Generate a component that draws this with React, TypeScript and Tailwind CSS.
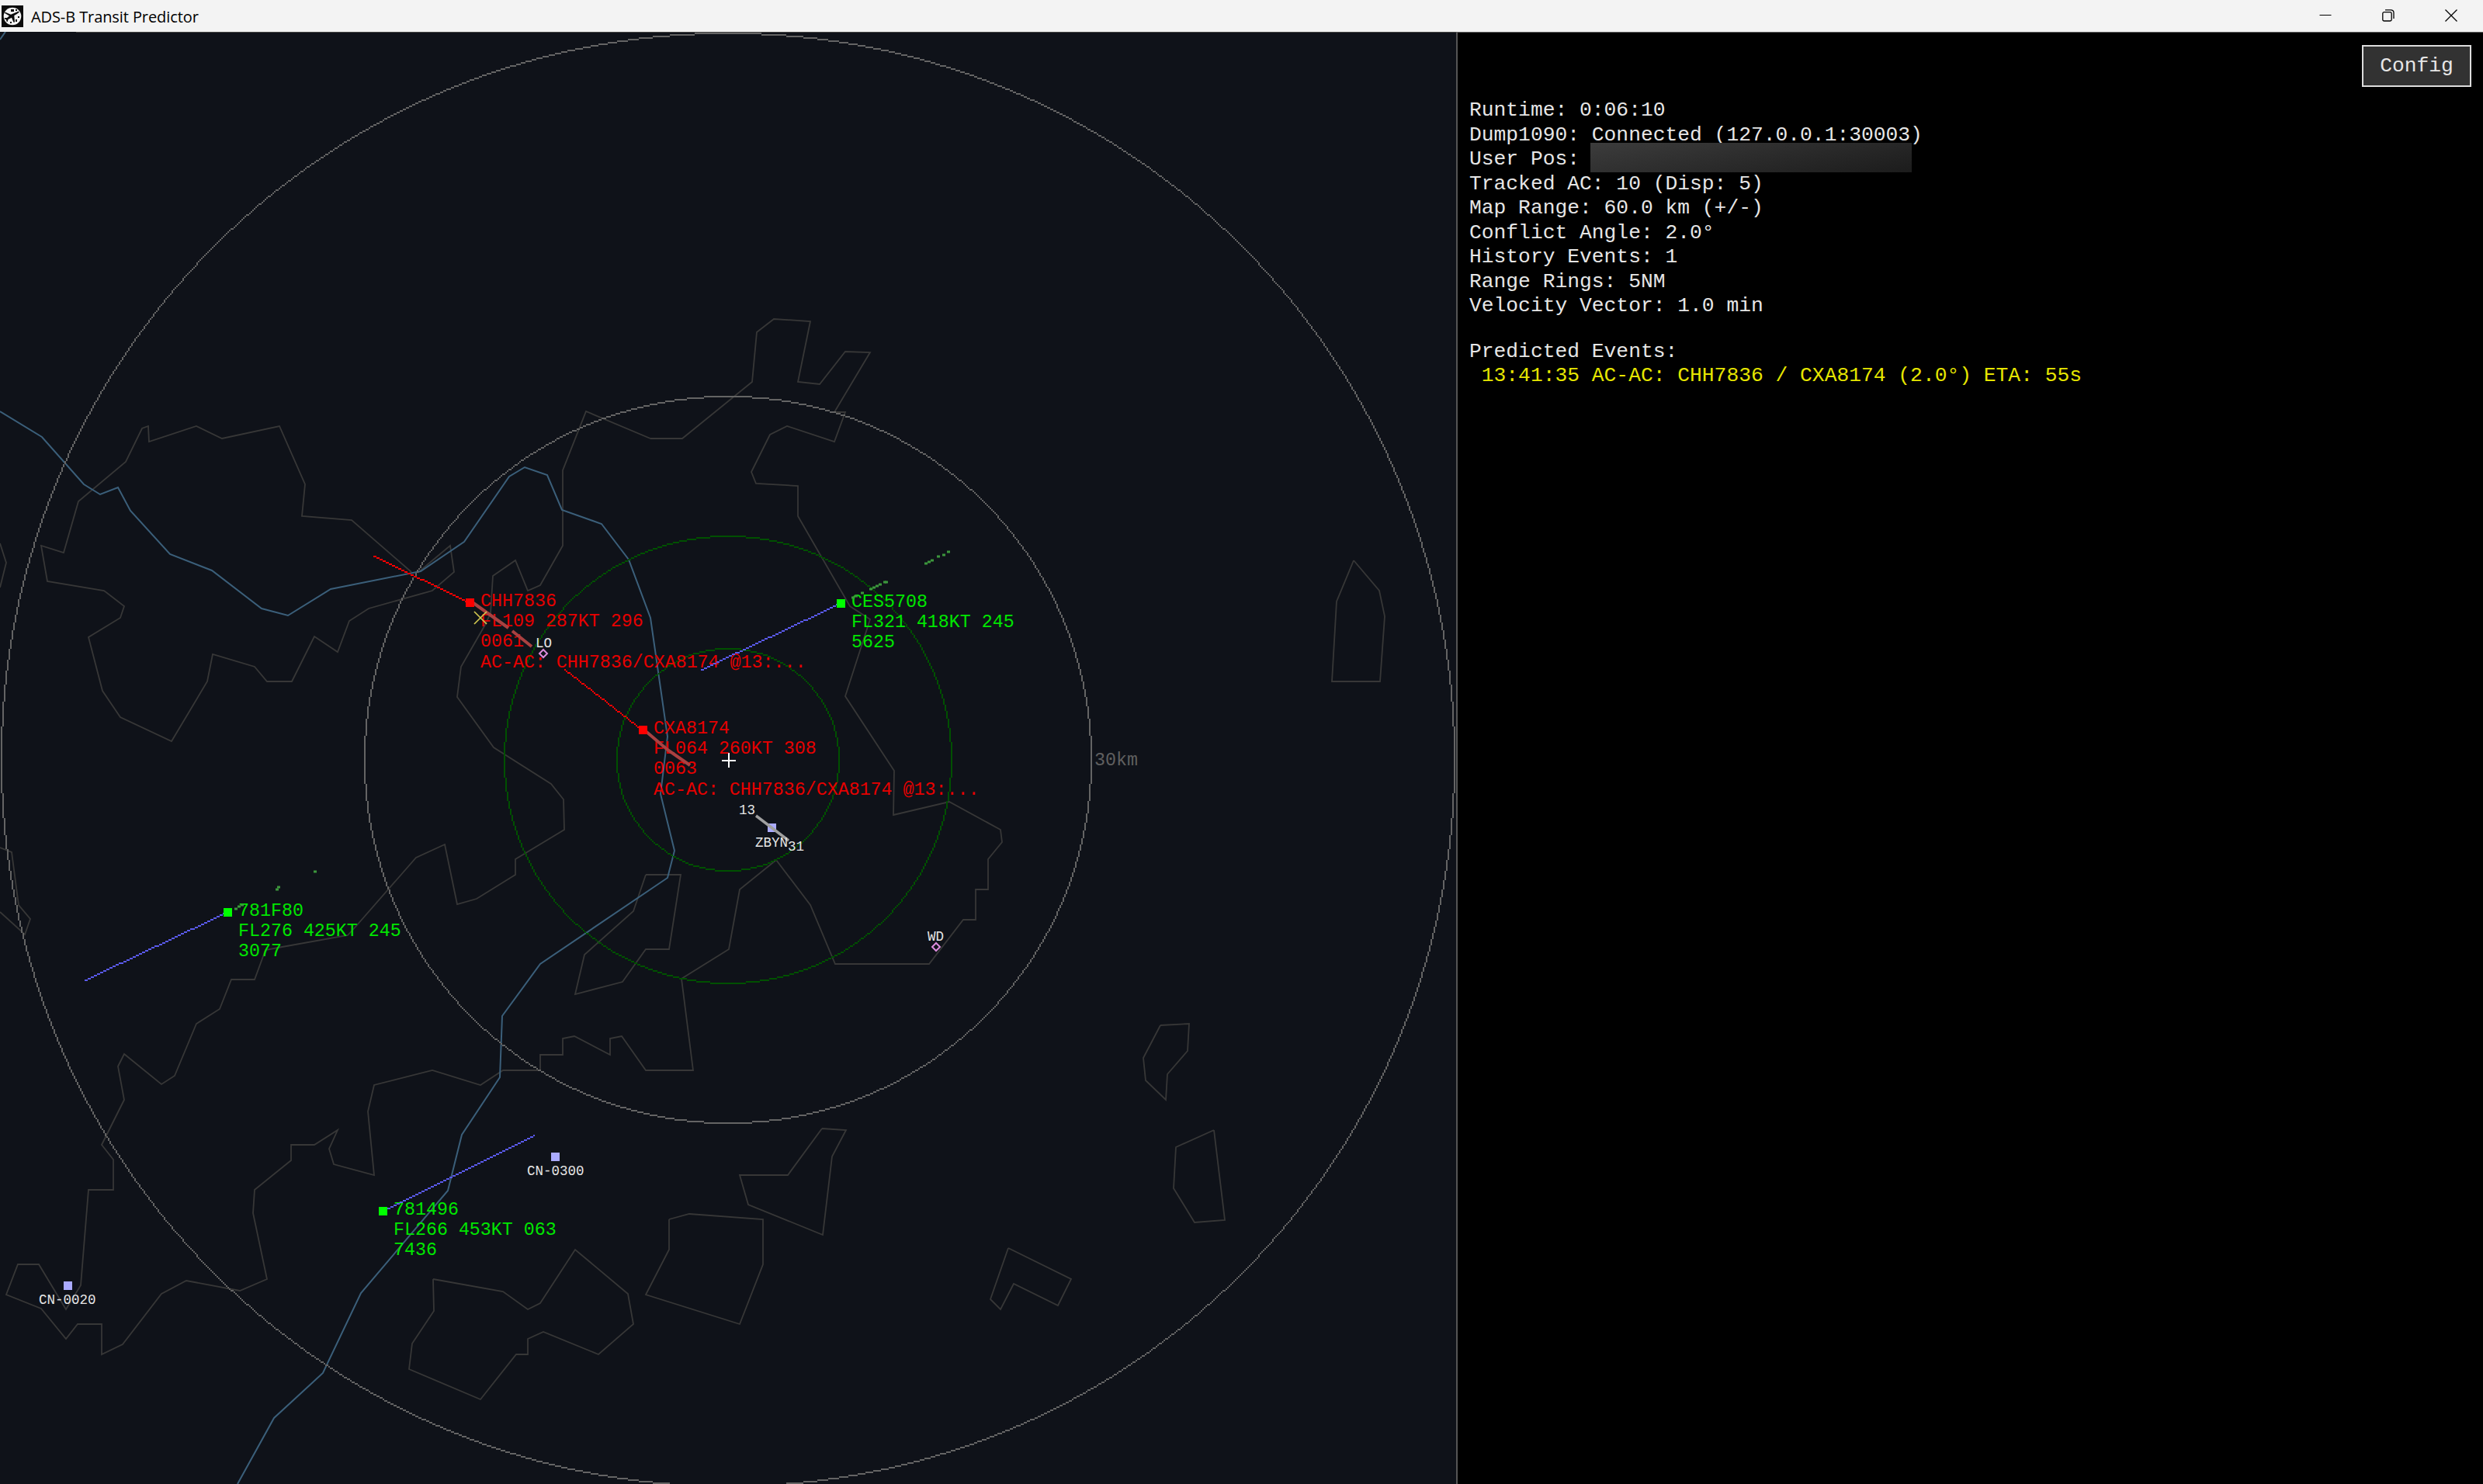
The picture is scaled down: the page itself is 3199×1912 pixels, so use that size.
import React from "react";

type Pt = [number, number];

const MAP_TOP = 41;
const PX = 2;

/** Midpoint circle rasterised on the radar's 2px grid. */
function ring(cx: number, cy: number, r: number): string {
  const seen = new Set<string>();
  let x = r;
  let y = 0;
  let err = 1 - r;
  while (x >= y) {
    const pts: Pt[] = [
      [x, y], [y, x], [-y, x], [-x, y], [-x, -y], [-y, -x], [y, -x], [x, -y],
    ];
    for (const [dx, dy] of pts) seen.add(`${cx + dx},${cy + dy}`);
    y++;
    if (err < 0) err += 2 * y + 1;
    else {
      x--;
      err += 2 * (y - x) + 1;
    }
  }
  return cells(seen);
}

/** Bresenham line rasterised on the radar's 2px grid. */
function vector([ax, ay]: Pt, [bx, by]: Pt): string {
  let x = Math.round(ax / PX);
  let y = Math.round((ay - MAP_TOP) / PX);
  const x1 = Math.round(bx / PX);
  const y1 = Math.round((by - MAP_TOP) / PX);
  const dx = Math.abs(x1 - x);
  const dy = -Math.abs(y1 - y);
  const sx = x < x1 ? 1 : -1;
  const sy = y < y1 ? 1 : -1;
  let e = dx + dy;
  const seen = new Set<string>();
  for (;;) {
    seen.add(`${x},${y}`);
    if (x === x1 && y === y1) break;
    const e2 = 2 * e;
    if (e2 >= dy) { e += dy; x += sx; }
    if (e2 <= dx) { e += dx; y += sy; }
  }
  return cells(seen);
}

function cells(seen: Set<string>): string {
  let d = "";
  seen.forEach((k) => {
    const [x, y] = k.split(",").map(Number);
    d += `M${x * PX - 1} ${y * PX + MAP_TOP - 1}h${PX}v${PX}h-${PX}z`;
  });
  return d;
}

const RIVERS = [
  "0,530 54,563 108,624 129,637 152,628 168,658 219,714 273,735 337,784 371,793 426,759 542,736 598,698 656,614 676,602 705,612 724,657 775,675 810,721 838,796 860,949 851,1023 869,1096 860,1131 696,1242 647,1309 644,1388 595,1462 577,1534 465,1666 416,1769 353,1827 306,1912",
  "0,51 7,41",
];

const BORDERS = [
  "530,737 453,670 389,665 393,624 360,549 286,565 253,549 192,569 191,549 183,552 162,595 101,646 82,712 53,703 61,749 134,761 160,781 155,796 114,821 132,890 155,924 221,955 267,878 274,843 328,859 344,878 376,878 405,820 435,840 450,800 475,784 557,761 585,737 580,703 538,738",
  "0,700 8,725 0,757",
  "0,1092 15,1098 24,1166 39,1184 32,1204 0,1175",
  "838,565 879,565 969,492 975,428 997,411 1044,414 1028,492 1056,495 1089,453 1121,454 1075,531 1089,531 1075,569 1014,549 992,560 968,608 974,623 1028,626 1028,665 1095,781 1121,798 1089,897 1152,993 1151,1050 1223,1033 1289,1069 1291,1085 1273,1107 1273,1146 1257,1146 1257,1185 1241,1185 1197,1242 1076,1242 1044,1166 1000,1108 953,1146 939,1223 878,1261 893,1379 832,1379 801,1335 786,1338 786,1359 740,1335 725,1338 725,1359 696,1359 696,1379 648,1379 619,1398 557,1379 482,1398 474,1432 482,1514 430,1500 424,1480 435,1456 405,1475 375,1475 375,1495 328,1533 326,1563 344,1648 309,1663 240,1650 208,1667 158,1732 131,1745 131,1706 100,1706 85,1725 53,1686 8,1668 23,1629 50,1629 85,1687 104,1656 114,1533 146,1533 146,1494 131,1475 160,1417 152,1374 160,1358 208,1397 225,1386 253,1319 283,1300 298,1262 328,1262 342,1224 358,1221 448,1205 459,1193 536,1105 573,1088 589,1165 614,1158 664,1127 664,1107 727,1069 726,1030 710,1010 636,963 589,898 594,859 625,805 632,790 635,742 664,722 680,761 696,754 725,703 725,606 755,530 838,565",
  "832,1127 877,1127 862,1223 832,1223 802,1265 741,1281 753,1230 816,1174 832,1127",
  "1059,1454 1090,1456 1072,1490 1060,1591 964,1552 953,1514 1015,1514 1059,1454",
  "862,1571 888,1564 983,1571 983,1629 953,1706 832,1668 862,1610 862,1571",
  "1299,1608 1380,1648 1363,1682 1306,1654 1289,1687 1276,1674 1299,1608",
  "1564,1456 1578,1572 1539,1575 1512,1531 1515,1478 1564,1456",
  "558,1648 648,1664 680,1687 696,1679 741,1610 809,1667 816,1706 771,1745 700,1716 680,1725 680,1745 665,1745 619,1803 527,1764 531,1731 559,1689 558,1648",
  "1495,1321 1532,1319 1530,1354 1504,1384 1502,1417 1476,1392 1473,1363 1495,1321",
  "1744,722 1777,761 1784,794 1778,878 1716,878 1722,775 1744,722",
];

const GREEN_DOTS: Pt[] = [
  [1222, 711], [1216, 715], [1209, 717], [1201, 722], [1197, 724], [1193, 726],
  [1142, 750], [1140, 750], [1134, 753], [1130, 755], [1126, 757], [1122, 759],
  [1111, 764], [1103, 768], [1099, 770], [406, 1123], [359, 1143], [357, 1146],
  [312, 1166], [308, 1168], [304, 1171],
];

interface Aircraft {
  x: number;
  y: number;
  alert?: boolean;
  end: Pt;
  lines: string[];
}

const AIRCRAFT: Aircraft[] = [
  { x: 605, y: 776, alert: true, end: [482, 716], lines: ["CHH7836", "FL109 287KT 296", "0061", "AC-AC: CHH7836/CXA8174 @13:..."] },
  { x: 828, y: 940, alert: true, end: [728, 862], lines: ["CXA8174", "FL064 260KT 308", "0063", "AC-AC: CHH7836/CXA8174 @13:..."] },
  { x: 1083, y: 777, end: [904, 862], lines: ["CES5708", "FL321 418KT 245", "5625"] },
  { x: 293, y: 1175, end: [109, 1263], lines: ["781F80", "FL276 425KT 245", "3077"] },
  { x: 493, y: 1560, end: [688, 1462], lines: ["781496", "FL266 453KT 063", "7436"] },
];

/** Small white labels: x is the left edge, y the baseline. */
const LABELS: { text: string; x: number; y: number }[] = [
  { text: "13", x: 952, y: 1049 },
  { text: "ZBYN", x: 973, y: 1091 },
  { text: "31", x: 1015, y: 1096 },
  { text: "LO", x: 690, y: 834 },
  { text: "WD", x: 1195, y: 1212 },
  { text: "CN-0300", x: 679, y: 1514 },
  { text: "CN-0020", x: 50, y: 1680 },
];

const STATUS = [
  "Runtime: 0:06:10",
  "Dump1090: Connected (127.0.0.1:30003)",
  "User Pos:",
  "Tracked AC: 10 (Disp: 5)",
  "Map Range: 60.0 km (+/-)",
  "Conflict Angle: 2.0°",
  "History Events: 1",
  "Range Rings: 5NM",
  "Velocity Vector: 1.0 min",
];

function AppIcon() {
  return (
    <svg className="h-7 w-7" viewBox="0 0 28 28">
      <rect width="28" height="28" fill="#0c0c0c" />
      <circle cx="14" cy="14" r="11.300" fill="#f4f4f4" />
      <path
        fill="#0c0c0c"
        d="M3.500 9.500l1.500-.7 7 3 6.500-2.800 3.500-1.500.8 1.300-3 2.200-3.500 2 .7 8.500-1.500.3-2.500-6-4.500 2.200-.8 3-1.200-.3-.5-2.500-2.500-1 .5-1.300 3 .2 3-2.600z"
      />
      <rect x="12" y="5" width="4" height="3" fill="#0c0c0c" />
      <rect x="18" y="5" width="2" height="2" fill="#0c0c0c" />
      <rect x="21" y="14" width="2" height="2" fill="#0c0c0c" />
      <rect x="18" y="18" width="2" height="3" fill="#0c0c0c" />
      <rect x="11" y="21" width="2" height="2" fill="#0c0c0c" />
    </svg>
  );
}

function TitleBar() {
  return (
    <header className="flex h-[41px] shrink-0 items-center bg-[#f3f3f3] pl-[2px]">
      <AppIcon />
      <span className="ml-[10px] mt-[2px] whitespace-nowrap font-['Open_Sans','Noto_Sans',sans-serif] text-[20px] leading-none tracking-[-0.090px] text-black">
        ADS-B Transit Predictor
      </span>
      <div className="ml-auto flex h-full items-center pb-[1px]">
        <svg className="mr-[65px] h-4 w-4" viewBox="0 0 16 16" fill="none" stroke="#000" strokeWidth="1">
          <path d="M0.500 7.500h15" />
        </svg>
        <svg className="mr-[65px] h-4 w-4" viewBox="0 0 16 16" fill="none" stroke="#000" strokeWidth="1.300">
          <rect x="0.800" y="3.600" width="11.400" height="11.400" rx="1.800" />
          <path d="M4 0.800h7.500a3.500 3.500 0 0 1 3.500 3.500V12" />
        </svg>
        <svg className="mr-[33px] h-4 w-4" viewBox="0 0 16 16" fill="none" stroke="#000" strokeWidth="1.300">
          <path d="M0.500 0.500l15 15M15.500 0.500l-15 15" />
        </svg>
      </div>
    </header>
  );
}

function Diamond({ x, y }: { x: number; y: number }) {
  return <path d={`M${x} ${y - 5}l5 5-5 5-5-5z`} fill="none" stroke="#dc8cdc" strokeWidth="2" />;
}

function RadarChart() {
  return (
    <svg className="block h-full w-full" viewBox="0 41 1876 1871">
      <path d="M98 41.500H1876" stroke="#454545" strokeWidth="1" />
      <g fill="none" stroke="#373737" strokeWidth="1.800">
        {BORDERS.map((p, i) => <polyline key={i} points={p} />)}
      </g>
      <g fill="none" stroke="#3b5f7a" strokeWidth="2">
        {RIVERS.map((p, i) => <polyline key={i} points={p} />)}
      </g>
      <g shapeRendering="crispEdges">
        <path d={ring(469, 469, 468)} fill="#646464" />
        <path d={ring(469, 469, 234)} fill="#646464" />
        <path d={ring(469, 469, 144)} fill="#005000" />
        <path
          d={ring(469, 469, 72)}
          fill="#005000"
          transform="translate(938 979) scale(0.993) translate(-938 -979)"
        />
        <path d="M930 979h18v2h-18zM938 970h2v19h-2z" fill="#ffffff" />
        {[[989, 1061], [710, 1485], [82, 1651]].map(([x, y]) => (
          <rect key={x} x={x} y={y} width="11" height="11" fill="#aaaaff" />
        ))}
      </g>
      <path d="M974 1051L1016 1083" stroke="#a0a0a0" strokeWidth="3.500" />
      <Diamond x={700} y={842} />
      <Diamond x={1206} y={1220} />
    </svg>
  );
}

function TrafficChart() {
  return (
    <svg className="absolute inset-0 h-full w-full" viewBox="0 41 1876 1871">
      <g fill="none" stroke="#aa4141" strokeWidth="4">
        <path d="M610 777L655 809M660 813L685 833" />
        <path d="M833 943L860 966L889 986" />
      </g>
      {GREEN_DOTS.map(([x, y]) => (
        <rect key={`${x}-${y}`} x={x - 2} y={y - 1.500} width="4" height="3" fill="#3c963c" />
      ))}
      <g shapeRendering="crispEdges">
        {AIRCRAFT.map((a) => (
          <g key={a.lines[0]}>
            <path d={vector([a.x, a.y], a.end)} fill={a.alert ? "#ff0000" : "#5a5aeb"} />
            <rect x={a.x - 5} y={a.y - 5} width="11" height="11" fill={a.alert ? "#ff0000" : "#00ff00"} />
          </g>
        ))}
      </g>
      <path d="M611 788L627 804M627 788L611 804" stroke="#d2c850" strokeWidth="1.700" />
    </svg>
  );
}

function RadarMap() {
  return (
    <section className="relative w-[1876px] shrink-0 overflow-hidden bg-[#0f1219]">
      <RadarChart />
      <span className="absolute left-[1410px] top-[926px] text-[23.300px] leading-[26px] text-[#5f5f5f]">30km</span>
      {LABELS.map((l) => (
        <span
          key={l.text}
          className="absolute whitespace-pre text-[17.500px] leading-5 text-[#e6e6e6]"
          style={{ left: l.x, top: l.y - MAP_TOP - 15 }}
        >
          {l.text}
        </span>
      ))}
      {AIRCRAFT.map((a) => (
        <div
          key={a.lines[0]}
          className={
            a.alert
              ? "absolute whitespace-pre text-[23.300px] leading-[26.200px] text-[#e60000]"
              : "absolute whitespace-pre text-[23.300px] leading-[26.200px] text-[#00e600]"
          }
          style={{ left: a.x + 14, top: a.y - MAP_TOP - 14 }}
        >
          {a.lines.map((t, i) => <div key={i}>{t}</div>)}
        </div>
      ))}
      <TrafficChart />
    </section>
  );
}

function InfoPanel() {
  return (
    <aside className="flex min-w-0 grow flex-col border-l-2 border-t border-l-[#555555] border-t-[#606060] bg-black pl-[15px] text-[26.310px] text-[#e6e6e6]">
      <div className="flex justify-end pr-[15px] pt-[16px]">
        <button className="h-[54px] w-[141px] border-2 border-[#dcdcdc] bg-[#323232] text-center leading-[45px]">
          Config
        </button>
      </div>
      <div className="mt-[15px] whitespace-pre leading-[31.530px]">
        {STATUS.map((s) => (
          <div key={s} className="flex h-[31.530px]">
            {s}
            {s === "User Pos:" && (
              <div className="relative z-10 ml-[14px] mt-[-6px] h-[38px] w-[414px] shrink-0 bg-linear-170 from-[#3c3c3c] to-[#1c1c1c]" />
            )}
          </div>
        ))}
        <div className="mt-[27px]">Predicted Events:</div>
        <div className="text-[#e6e600]"> 13:41:35 AC-AC: CHH7836 / CXA8174 (2.0°) ETA: 55s</div>
      </div>
    </aside>
  );
}

export default function App() {
  return (
    <div className="flex h-[1912px] w-[3199px] flex-col overflow-hidden bg-black font-['Liberation_Mono',monospace]">
      <TitleBar />
      <main className="flex min-h-0 grow">
        <RadarMap />
        <InfoPanel />
      </main>
    </div>
  );
}
